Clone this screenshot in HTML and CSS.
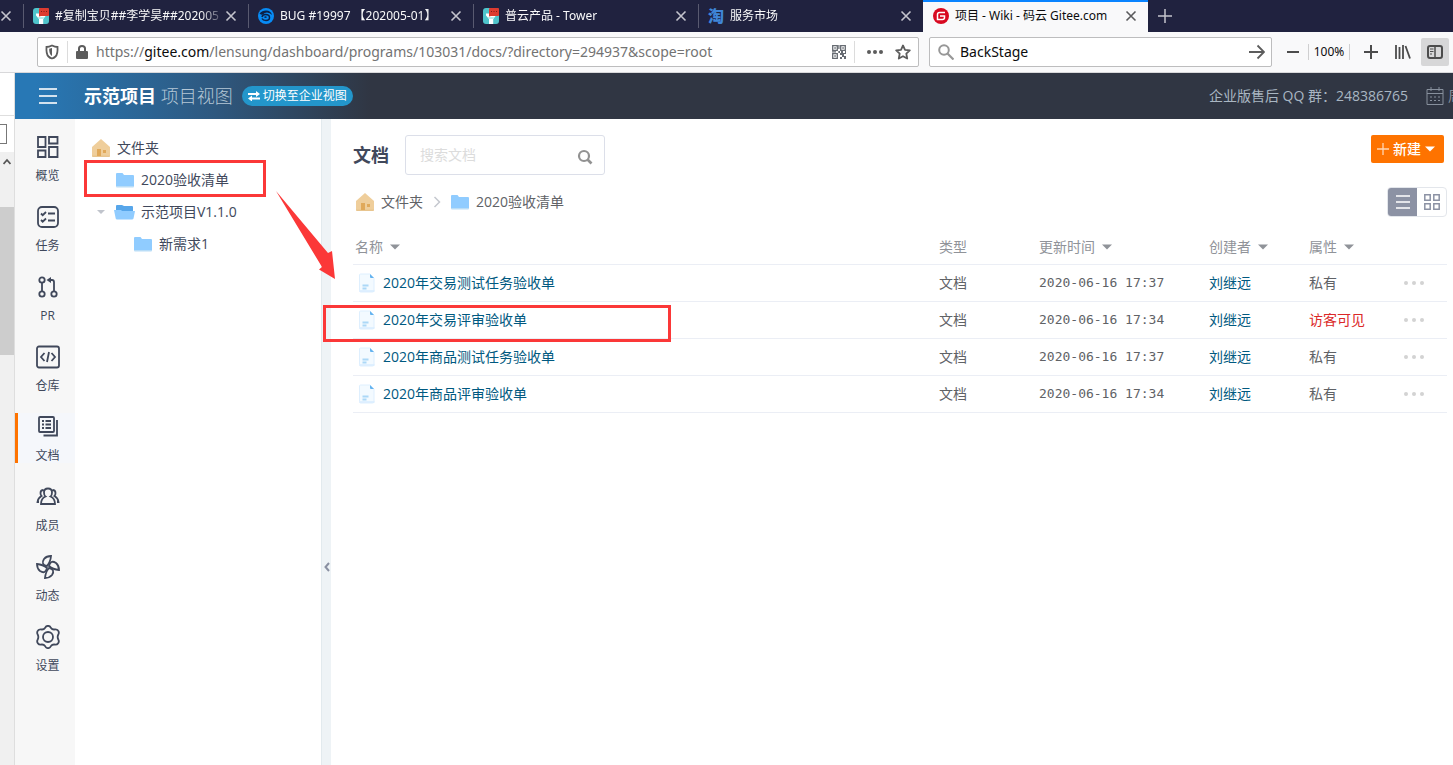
FILE: index.html
```html
<!DOCTYPE html>
<html lang="zh-CN">
<head>
<meta charset="utf-8">
<title>项目 - Wiki - 码云 Gitee.com</title>
<link rel="stylesheet" href="styles.css">
</head>
<body>
<svg class="defs" aria-hidden="true">
  <symbol id="close" viewBox="0 0 12 12"><path d="M1.5 1.5l9 9M10.500 1.500l-9 9" fill="none" stroke="currentColor" stroke-width="1.6"/></symbol>
  <symbol id="caret" viewBox="0 0 10 6"><path d="M0 0.500h10L5 5.500z" fill="currentColor"/></symbol>
  <symbol id="tower" viewBox="0 0 16 16"><rect width="16" height="16" rx="3" fill="#4fc4cb"/><path d="M3 5.500h10v2L10.200 11v5H6v-5L3 7.500z" fill="#fff"/><path d="M4.500 9h7L9.800 11H6.200z" fill="#b9ecec"/><path d="M7 0h8.500l.5 1v6q0 1-1 1H8L6 8.500V1q0-1 1-1z" fill="#dc3b30"/><path d="M8 3.500h1M10.500 3.500h1M13 3.500h1" stroke="#7e1d1a"/></symbol>
  <symbol id="home" viewBox="0 0 18 18"><path d="M9 0L18 8v8.500q0 1.500-1.500 1.500h-15Q0 18 0 16.500V8z" fill="#efce9b"/><path d="M0 16.500h18q0 1.500-1.500 1.500h-15Q0 18 0 16.500z" fill="#e8c58f"/><path d="M5 10h4v7H5zM11 11h3v3h-3z" fill="#e0a95a"/></symbol>
  <symbol id="folder" viewBox="0 0 18 16"><path d="M1 1h5.500L8 3h9q1 0 1 1v10.500H0V2q0-1 1-1z" fill="#90ccff"/><path d="M0 14h18v.5q0 1-1 1H1q-1 0-1-1z" fill="#b9ddf7"/></symbol>
  <symbol id="folder-open" viewBox="0 0 21 16"><path d="M3 1h5l2 1h8q1 0 1 1v5H2V2q0-1 1-1z" fill="#57a6ea"/><path d="M0 6h7l1 1h13l-1.500 7.500q-.3 1-1.500 1H3q-1 0-1.300-1z" fill="#90ccff"/></symbol>
  <symbol id="file" viewBox="0 0 16 20"><path d="M1.500 1h9.500l4 4v12.500q0 1.500-1.500 1.500h-12Q.5 19 .5 17.500V2q0-1 1-1z" fill="#f3faff" stroke="#deeffe"/><path d="M.5 18h15" stroke="#d9edff" stroke-width="1.500"/><path d="M11 1l4 4h-3q-1 0-1-1z" fill="#64b3ef"/><path d="M3.500 12.500h6M3.500 15.500h4" stroke="#acd8f7" stroke-width="2"/></symbol>
</svg>

<nav class="tabs" aria-label="浏览器标签">
  <div class="tab-stub"><button class="tab-close" aria-label="关闭"><svg width="12" height="12"><use href="#close"/></svg></button></div>
  <div class="tab"><svg class="favicon" viewBox="0 0 16 16"><use href="#tower"/></svg><span class="tab-title">#复制宝贝##李学昊##202005</span><button class="tab-close" aria-label="关闭"><svg width="12" height="12"><use href="#close"/></svg></button></div>
  <div class="tab"><svg class="favicon" viewBox="0 0 16 16"><circle cx="8" cy="8" r="8" fill="#078bf5"/><path d="M1.500 5.500Q4 2.500 8 2.500q5 0 6 4.500-2-2.500-5-2.500-2.500 0-4 2Q2.500 7 1.500 5.500z" fill="#0c2148"/><path d="M4 9q.5-2.500 3.500-2.500 4 0 4 3 0 3-3.500 3-3 0-4-2" fill="none" stroke="#0c2148" stroke-width="1.500"/><path d="M6.500 9.500q1-1 2 0" fill="none" stroke="#0c2148" stroke-width="1.200"/></svg><span class="tab-title">BUG #19997 【202005-01】</span><button class="tab-close" aria-label="关闭"><svg width="12" height="12"><use href="#close"/></svg></button></div>
  <div class="tab"><svg class="favicon" viewBox="0 0 16 16"><use href="#tower"/></svg><span class="tab-title">普云产品 - Tower</span><button class="tab-close" aria-label="关闭"><svg width="12" height="12"><use href="#close"/></svg></button></div>
  <div class="tab"><span class="favicon tao">淘</span><span class="tab-title">服务市场</span><button class="tab-close" aria-label="关闭"><svg width="12" height="12"><use href="#close"/></svg></button></div>
  <div class="tab active"><svg class="favicon" viewBox="0 0 16 16"><circle cx="8" cy="8" r="8" fill="#d80920"/><path d="M12 4.500H6.500q-2 0-2 2v5h5q2 0 2-2V8H7" fill="none" stroke="#fff" stroke-width="1.500"/></svg><span class="tab-title">项目 - Wiki - 码云 Gitee.com</span><button class="tab-close" aria-label="关闭"><svg width="12" height="12"><use href="#close"/></svg></button></div>
  <button class="tab-new" aria-label="新标签页"><svg width="14" height="14" viewBox="0 0 14 14"><path d="M7 0v14M0 7h14" stroke="currentColor" stroke-width="1.500"/></svg></button>
</nav>

<div class="toolbar">
  <div class="address">
    <svg width="14" height="16" viewBox="0 0 14 16"><path d="M7 1.500q3 1.500 5.500 1.500.5 7-2 9.500Q9 14 7 14.500 5 14 3.500 12.500 1 10 1.500 3 4 3 7 1.500z" fill="none" stroke="#5c5c5c" stroke-width="1.800"/><path d="M7 4v8Q4 10.500 4.200 4.800z" fill="#5c5c5c"/></svg>
    <i class="rule"></i>
    <svg width="12" height="16" viewBox="0 0 12 16"><path d="M3 7V4.500Q3 2 6 2t3 2.500V7" fill="none" stroke="#5c5c5c" stroke-width="2"/><rect y="7" width="12" height="8" rx="1" fill="#5c5c5c"/></svg>
    <div class="url">https://<b>gitee.com</b>/lensung/dashboard/programs/103031/docs/?directory=294937&amp;scope=root</div>
    <svg width="14" height="14" viewBox="0 0 14 14"><path d="M.7.7h4.600v4.600H.7zM8.700.7h4.600v4.600H8.700zM.7 8.700h4.600v4.600H.7z" fill="none" stroke="#666b72" stroke-width="1.300"/><path d="M2.300 2.300h1.500v1.500H2.300zM10.300 2.300h1.500v1.500h-1.500zM2.300 10.300h1.500v1.500H2.300zM6.300 0h1.200v4H6.300zM6.300 6H8v2H6.300zM0 6.300h4v1.200H0zM9 6h2v2h2V6h1v3h-2v2h2v3h-2v-2h-2v2H8v-2h2v-2H8V8h1z" fill="#666b72"/></svg>
    <i class="rule"></i>
    <svg class="dots" width="16" height="16" viewBox="0 0 16 16"><g fill="#5c5c5c"><circle cx="2" cy="8" r="2"/><circle cx="8" cy="8" r="2"/><circle cx="14" cy="8" r="2"/></g></svg>
    <svg width="16" height="16" viewBox="0 0 16 16"><path d="M8 1.500l2 4.300 4.800.6-3.500 3.300.9 4.800L8 12.200l-4.200 2.300.9-4.800L1.200 6.400 6 5.800z" fill="none" stroke="#5c5c5c" stroke-width="1.800" stroke-linejoin="round"/></svg>
  </div>
  <div class="browser-search">
    <svg width="16" height="16" viewBox="0 0 16 16"><circle cx="6" cy="6" r="4.800" fill="none" stroke="#979797" stroke-width="2"/><path d="M9.500 9.500l6 6" stroke="#979797" stroke-width="2.200"/></svg>
    <input type="text" value="BackStage" aria-label="搜索">
    <svg width="16" height="16" viewBox="0 0 16 16"><path d="M0 8h15M8.500 1.500L15 8l-6.500 6.500" fill="none" stroke="#5c5c5c" stroke-width="1.800"/></svg>
  </div>
  <div class="tools">
    <button class="tool minus" aria-label="缩小"><svg width="12" height="14" viewBox="0 0 12 14"><path d="M0 7h12" stroke="#4c4c4c" stroke-width="2"/></svg></button>
    <button class="tool zoom">100%</button>
    <button class="tool" aria-label="放大"><svg width="14" height="14" viewBox="0 0 14 14"><path d="M0 7h14M7 0v14" stroke="#4c4c4c" stroke-width="2"/></svg></button>
    <button class="tool" aria-label="书库"><svg width="16" height="16" viewBox="0 0 16 16"><path d="M1 1v14M4.500 3v12M8 1v14M10.500 2l4.500 12.500" stroke="#4c4c4c" stroke-width="1.800"/></svg></button>
    <button class="tool pressed" aria-label="侧栏"><svg width="16" height="14" viewBox="0 0 16 14"><rect x="1" y="1" width="14" height="12" rx="2" fill="none" stroke="#4c4c4c" stroke-width="2"/><path d="M8 1v12" stroke="#4c4c4c" stroke-width="1.500"/><path d="M3 4h3.500M3 6.500h3.500M3 9h2" stroke="#4c4c4c"/></svg></button>
  </div>
</div>

<div class="page">
  <aside class="outer-sidebar">
    <div class="os-head"></div>
    <div class="os-filter"><span></span></div>
    <div class="os-scroll"><svg width="8" height="8" viewBox="0 0 8 8"><path d="M.5 6L4 2l3.500 4" fill="none" stroke="#555" stroke-width="1.800"/></svg><div class="os-thumb"></div></div>
  </aside>

  <div class="app">
    <header class="app-header">
      <button class="burger" aria-label="菜单"><svg width="18" height="16" viewBox="0 0 18 16"><path d="M0 1h18M0 8h18M0 15h18" stroke="#d3e2ee" stroke-width="2"/></svg></button>
      <h1>示范项目 <small>项目视图</small></h1>
      <a class="switch" href="#"><svg width="12" height="10" viewBox="0 0 12 10"><path d="M0 3h8M4 7.500h8" stroke="#fff" stroke-width="1.800"/><path d="M8 0l4 3-4 3zM4 4.500v6L0 7.500z" fill="#fff"/></svg>切换至企业视图</a>
      <div class="header-right"><span>企业版售后 QQ 群：248386765</span>
        <a href="#"><svg width="18" height="18" viewBox="0 0 18 18"><path d="M1 2.500h16v15H1zM1 6.500h16M5 0v4M13 0v4" fill="none" stroke="#87909d"/><path d="M4 10h2M8 10h2M12 10h2M4 13.500h2M8 13.500h2M12 13.500h2" stroke="#87909d"/></svg>周</a></div>
    </header>

    <div class="app-body">
      <nav class="side-nav">
        <a href="#"><svg viewBox="0 0 24 24"><path d="M2 2h7.500v10H2zM13 2h8.500v6.500H13zM2 15.500h7.500V22H2zM13 12h8.500v10H13z"/></svg>概览</a>
        <a href="#"><svg viewBox="0 0 24 24"><rect x="2" y="2" width="20" height="20" rx="4"/><path d="M5 8.500l1.700 1.700L10 7M12 8.500h7M5 15l1.700 1.700L10 13.500M12 15.500h7"/></svg>任务</a>
        <a href="#"><svg viewBox="0 0 24 24"><circle cx="6" cy="5" r="2.700"/><circle cx="6" cy="19" r="2.700"/><circle cx="18" cy="19" r="2.700"/><path d="M6 8v8M18 16V7q0-2-2-2h-4"/><path d="M15 2v6l-4.500-3z" fill="#40485b" stroke="none"/></svg>PR</a>
        <a href="#"><svg viewBox="0 0 24 24"><rect x="1" y="1.500" width="22" height="21" rx="2"/><path d="M8.500 8L5 12l3.500 4M15.500 8l3.500 4-3.500 4M13 7l-2 10"/></svg>仓库</a>
        <a href="#" class="current"><svg viewBox="0 0 24 24"><rect x="3" y="2" width="15" height="15" rx="1"/><path d="M21 5v15.500H7.500M6 6h2M9.500 6H15M6 9.500h2M9.500 9.500H15M6 13h2M9.500 13H15"/></svg>文档</a>
        <a href="#"><svg viewBox="0 0 24 24"><path d="M12 3.500q4 0 4 4 0 3-1.500 4 4.500 2 4.500 7.500H5q0-5.500 4.500-7.500Q8 10.500 8 7.500q0-4 4-4zM7.500 5Q4.500 5 4.500 8q0 2 1 3Q2 13 1.500 17H3M16.500 5q3 0 3 3 0 2-1 3 3.500 2 4 6H21"/></svg>成员</a>
        <a href="#"><svg viewBox="0 0 24 24"><g id="blade"><path d="M11 11Q4.500 9.500 8 4q2.500-3 7-3-.5 6-4 10z"/></g><use href="#blade" transform="rotate(90 12 12)"/><use href="#blade" transform="rotate(180 12 12)"/><use href="#blade" transform="rotate(270 12 12)"/></svg>动态</a>
        <a href="#"><svg viewBox="0 0 24 24"><path d="M12 .8q2 0 3 2.200 1 1.500 3 1.500 3-.5 4 1 1.500 2 .3 4-1.300 2.500 0 5 1.200 2-.3 4-1 1.500-4 1-2 0-3 1.500-1 2.200-3 2.200T9 21q-1-1.500-3-1.500-3 .5-4-1-1.500-2-.3-4 1.300-2.500 0-5-1.200-2 .3-4 1-1.500 4-1 2 0 3-1.500Q10 .8 12 .8z"/><circle cx="12" cy="12" r="5"/></svg>设置</a>
      </nav>

      <aside class="tree">
        <a href="#" class="root"><svg width="18" height="18"><use href="#home"/></svg>文件夹</a>
        <a href="#" class="level1"><svg width="18" height="16"><use href="#folder"/></svg>2020验收清单</a>
        <a href="#" class="level1 open"><svg class="twist" width="8" height="6"><use href="#caret"/></svg><svg width="21" height="16"><use href="#folder-open"/></svg>示范项目V1.1.0</a>
        <a href="#" class="level2"><svg width="18" height="16"><use href="#folder"/></svg>新需求1</a>
      </aside>
      <button class="splitter" aria-label="收起"><svg width="6" height="10" viewBox="0 0 6 10"><path d="M5 1L1.500 5 5 9" fill="none" stroke="#8a90a2" stroke-width="2"/></svg></button>

      <main class="content">
        <div class="content-head">
          <h2>文档</h2>
          <label class="doc-search"><input type="search" placeholder="搜索文档" aria-label="搜索文档"><svg width="16" height="16" viewBox="0 0 16 16"><circle cx="7" cy="7" r="5" fill="none" stroke="#929292" stroke-width="2.200"/><path d="M10.500 10.500l4 4" stroke="#929292" stroke-width="2.600"/></svg></label>
          <button class="create"><svg width="12" height="12" viewBox="0 0 12 12"><path d="M6 0v12M0 6h12" stroke="#ffd6b3" stroke-width="1.300"/></svg>新建<svg width="10" height="6"><use href="#caret"/></svg></button>
        </div>
        <div class="crumb-row">
          <a href="#"><svg width="18" height="18"><use href="#home"/></svg>文件夹</a>
          <svg class="chevron" width="8" height="12" viewBox="0 0 8 12"><path d="M1.500 1l5 5-5 5" fill="none" stroke="#c5c8cf" stroke-width="1.500"/></svg>
          <a href="#"><svg width="18" height="16"><use href="#folder"/></svg>2020验收清单</a>
          <div class="view-toggle">
            <button class="on" aria-label="列表"><svg width="14" height="14" viewBox="0 0 14 14"><path d="M0 1h14M0 7h14M0 13h14" stroke="#fff" stroke-width="1.500"/></svg></button>
            <button aria-label="网格"><svg width="16" height="16" viewBox="0 0 16 16"><path d="M.8.8h5.400v5.400H.8zM9.800.8h5.400v5.400H9.800zM.8 9.800h5.400v5.400H.8zM9.800 9.800h5.400v5.400H9.800z" fill="none" stroke="#8c92a4" stroke-width="1.500"/></svg></button>
          </div>
        </div>
        <table>
          <colgroup><col><col class="c-type"><col class="c-time"><col class="c-user"><col class="c-attr"><col class="c-more"></colgroup>
          <thead><tr><th>名称<svg width="10" height="6"><use href="#caret"/></svg></th><th>类型</th><th>更新时间<svg width="10" height="6"><use href="#caret"/></svg></th><th>创建者<svg width="10" height="6"><use href="#caret"/></svg></th><th>属性<svg width="10" height="6"><use href="#caret"/></svg></th><th></th></tr></thead>
          <tbody>
            <tr><td><a href="#"><svg width="16" height="20"><use href="#file"/></svg>2020年交易测试任务验收单</a></td><td>文档</td><td class="time">2020-06-16 17:37</td><td><a href="#">刘继远</a></td><td>私有</td><td><button class="more" aria-label="更多"><i></i><i></i><i></i></button></td></tr>
            <tr><td><a href="#"><svg width="16" height="20"><use href="#file"/></svg>2020年交易评审验收单</a></td><td>文档</td><td class="time">2020-06-16 17:34</td><td><a href="#">刘继远</a></td><td class="public">访客可见</td><td><button class="more" aria-label="更多"><i></i><i></i><i></i></button></td></tr>
            <tr><td><a href="#"><svg width="16" height="20"><use href="#file"/></svg>2020年商品测试任务验收单</a></td><td>文档</td><td class="time">2020-06-16 17:37</td><td><a href="#">刘继远</a></td><td>私有</td><td><button class="more" aria-label="更多"><i></i><i></i><i></i></button></td></tr>
            <tr><td><a href="#"><svg width="16" height="20"><use href="#file"/></svg>2020年商品评审验收单</a></td><td>文档</td><td class="time">2020-06-16 17:34</td><td><a href="#">刘继远</a></td><td>私有</td><td><button class="more" aria-label="更多"><i></i><i></i><i></i></button></td></tr>
          </tbody>
        </table>
      </main>
    </div>
  </div>
</div>

<div class="mark mark-folder"></div>
<div class="mark mark-doc"></div>
<svg class="mark-arrow" width="60" height="90" viewBox="0 0 60 90"><path d="M0 0L52 62 56 60 59 88 43 78.500 46 76z" fill="#fb3838"/></svg>
</body>
</html>
```

FILE: styles.css
```css
* { box-sizing: border-box; }
body {
  position: relative;
  margin: 0;
  height: 100vh;
  display: flex;
  flex-direction: column;
  overflow: hidden;
  background: #fff;
  color: #40485b;
  font: 14px/20px "Open Sans", "Noto Sans CJK SC", sans-serif;
}
a { color: inherit; text-decoration: none; }
button, input { margin: 0; padding: 0; border: 0; background: none; font: inherit; color: inherit; outline: 0; }
svg { flex: none; }
.defs { position: absolute; width: 0; height: 0; }

/* Browser tabs */
.tabs, .toolbar { font-family: "Noto Sans", "Noto Sans CJK SC", sans-serif; }
.tabs { flex: none; display: flex; height: 32px; background: #20223f; color: #f9f9fa; font-size: 12px; }
.tab-stub { width: 23px; display: flex; align-items: center; }
.tab { position: relative; flex: 0 1 225px; min-width: 0; display: flex; align-items: center; padding: 0 11px 0 10px; }
.tab::before { content: ""; position: absolute; left: 0; top: 4px; bottom: 4px; width: 1px; background: #595a70; }
.tab.active { background: #f9f9fa; color: #0c0c0d; border-top: 2px solid #0a84ff; padding-bottom: 2px; }
.tab.active::before { display: none; }
.favicon { flex: none; width: 16px; height: 16px; margin-right: 6px; }
.tao { color: #3f86d8; font-size: 16px; line-height: 16px; font-weight: 900; }
.tab-title { flex: 1; min-width: 0; overflow: hidden; white-space: nowrap; -webkit-mask-image: linear-gradient(90deg, #000 calc(100% - 24px), transparent); }
.tab.active .tab-title { -webkit-mask-image: none; }
.tab-close { display: flex; color: #c4c4cd; }
.active .tab-close { color: #5a5a5c; }
.tab-new { display: flex; align-items: center; padding: 0 10px; color: #c4c4cd; }

/* Browser toolbar */
.toolbar { flex: none; display: flex; gap: 10px; align-items: center; height: 41px; padding: 0 4px 0 37px; background: #f9f9fa; border-bottom: 1px solid #d8d8da; }
.address, .browser-search { display: flex; align-items: center; height: 30px; border: 1px solid #bdbdbe; border-radius: 2px; background: #fff; }
.address { flex: 1; min-width: 0; gap: 8px; padding: 0 7px; }
.dots { margin: 0 4px; }
.rule { width: 1px; height: 22px; background: #dcdcdc; }
.url { flex: 1; min-width: 0; overflow: hidden; white-space: nowrap; color: #737373; }
.url b { font-weight: 400; color: #0c0c0d; }
.browser-search { flex: none; width: 343px; gap: 6px; padding: 0 6px 0 8px; color: #0c0c0d; }
.browser-search input { flex: 1; min-width: 0; }
.tools { display: flex; align-items: center; gap: 4px; }
.tool { display: flex; align-items: center; justify-content: center; width: 28px; height: 28px; color: #0c0c0d; font-size: 12px; }
.minus { width: 22px; }
.zoom { width: 42px; height: 16px; margin-right: 3px; border: 1px solid #cfcfd0; border-width: 0 1px; }
.pressed { border-radius: 2px; background: #d7d7d8; }

/* Page frame */
.page { flex: 1; min-height: 0; display: flex; }
.outer-sidebar { flex: none; width: 15px; display: flex; flex-direction: column; border-right: 1px solid #dedede; background: #fff; }
.os-head { height: 43px; border-bottom: 1px solid #dedede; }
.os-filter { padding: 8px 0; }
.os-filter span { display: block; width: 7px; height: 20px; border: 1px solid #777; border-left: 0; }
.os-scroll { flex: 1; display: flex; flex-direction: column; background: #f0f0f0; }
.os-scroll svg { margin: 6px 0 0 3px; }
.os-thumb { height: 148px; margin-top: 41px; background: #cdcdcd; }
.app { flex: 1; min-width: 0; display: flex; flex-direction: column; }

.app-header { flex: none; display: flex; align-items: center; height: 46px; overflow: hidden; padding-left: 24px; white-space: nowrap; background: linear-gradient(90deg, #2878b5 20px, #2e587f 200px, #303643 355px); }
.burger { display: flex; margin-right: 27px; }
h1 { margin: 0 9px 0 0; color: #fff; font-size: 18px; line-height: 24px; font-weight: 700; }
h1 small { font-size: 18px; font-weight: 300; color: #b5c7d6; }
.switch { display: flex; align-items: center; gap: 3px; height: 20px; padding: 0 6px; border-radius: 10px; background: #2396cb; color: #fff; font-size: 12px; }
.header-right { display: flex; align-items: center; gap: 18px; margin: 0 -9px 0 auto; color: #a9b6c2; }
.header-right a { display: flex; align-items: center; gap: 4px; color: #87909d; }

.app-body { flex: 1; min-height: 0; display: flex; }
.side-nav { flex: none; width: 60px; display: flex; flex-direction: column; gap: 20px; padding-top: 14px; background: #f7f7f7; }
.side-nav a { display: flex; flex-direction: column; align-items: center; gap: 9px; height: 50px; padding: 2px 0 0 5px; font-size: 12px; line-height: 16px; }
.side-nav svg { width: 24px; height: 24px; fill: none; stroke: #40485b; stroke-width: 1.8; }
.side-nav .current { background: #f5f7fb; border-left: 3px solid #fe7300; padding-left: 2px; }

.tree { flex: none; width: 246px; padding-top: 12px; }
.tree a { display: flex; align-items: center; gap: 7px; height: 32px; padding-left: 17px; }
.tree .root { height: 33px; }
.tree .level1 { padding-left: 41px; }
.tree .open { gap: 6px; padding-left: 22px; }
.tree .level2 { padding-left: 59px; }
.twist { margin-right: 3px; color: #c0c4cc; }
.splitter { flex: none; width: 10px; display: flex; align-items: center; justify-content: center; padding-top: 250px; border-left: 1px solid #e2eaee; background: #eef3f6; }

/* Documents */
.content { flex: 1; min-width: 0; padding: 16px 6px 0 22px; }
.content-head { display: flex; align-items: flex-start; height: 40px; }
h2 { margin: 0 16px 0 0; font-size: 18px; line-height: 40px; }
.doc-search { display: flex; align-items: center; width: 200px; height: 40px; padding: 0 11px 0 14px; border: 1px solid #dcdfe9; border-radius: 3px; }
.doc-search input { flex: 1; min-width: 0; }
.doc-search svg { margin-top: 4px; }
.doc-search input::placeholder { color: #dcdcdc; opacity: 1; }
.create { display: flex; align-items: center; gap: 4px; height: 28px; margin: 0 3px 0 auto; padding: 0 9px 0 6px; border-radius: 2px; background: #fe7300; color: #fff; font-weight: 500; }
.crumb-row { display: flex; align-items: center; gap: 10px; height: 30px; margin: 12px 0 10px; padding-left: 3px; color: #606266; }
.crumb-row a { display: flex; align-items: center; gap: 7px; }
.view-toggle { display: flex; width: 60px; height: 30px; margin-left: auto; border: 1px solid #e3e6eb; border-radius: 4px; overflow: hidden; }
.view-toggle button { flex: 1; display: flex; align-items: center; justify-content: center; }
.view-toggle .on { background: #8c92a4; }
table { width: 100%; table-layout: fixed; border-collapse: collapse; color: #606266; }
.c-type, .c-user { width: 100px; }
.c-time { width: 170px; }
.c-attr { width: 95px; }
.c-more { width: 43px; }
th, td { height: 37px; padding: 0; border-bottom: 1px solid #ebeef5; text-align: left; font-weight: 400; }
th { padding-top: 3px; color: #909399; }
th:first-child { padding-left: 2px; }
th svg { margin-left: 7px; vertical-align: 2px; }
td a { color: #005980; }
td:first-child a { display: flex; align-items: center; gap: 8px; padding-left: 6px; }
.time { font-family: "DejaVu Sans Mono", monospace; font-size: 13px; }
.public { color: #db2828; }
.more { display: flex; gap: 4px; }
.more i { width: 4px; height: 4px; border-radius: 2px; background: #d3d3d3; }

/* Callouts drawn over the page */
.mark { position: absolute; height: 37px; border: 3px solid #fb3838; }
.mark-folder { left: 84px; top: 160px; width: 182px; }
.mark-doc { left: 323px; top: 305px; width: 348px; }
.mark-arrow { position: absolute; left: 276px; top: 191px; }
```
